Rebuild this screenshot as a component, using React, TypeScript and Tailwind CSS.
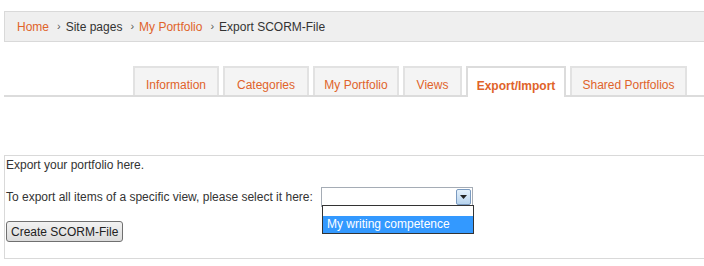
import React from 'react';

const tabs = [
  { label: 'Information', w: 'w-[86px]' },
  { label: 'Categories', w: 'w-[86px]' },
  { label: 'My Portfolio', w: 'w-[86px]' },
  { label: 'Views', w: 'w-[59px]' },
  { label: 'Export/Import', w: 'w-[100px]', active: true },
  { label: 'Shared Portfolios', w: 'w-[117px]' },
];

function Sep() {
  return <span className="ml-[8px] mr-[5px] text-[11px] text-[#555]">›</span>;
}

export default function App() {
  return (
    <div className="w-[704px] h-[266px] bg-white overflow-hidden font-['Liberation_Sans',Arial,sans-serif] text-[12px] text-[#333]">
      {/* Breadcrumb */}
      <div className="mt-[11px] ml-[4px] h-[31px] bg-[#efefef] border-y border-l border-[#d9d9d9] flex items-center pl-[12px]">
        <span className="text-[#e0632a]">Home</span>
        <Sep />
        <span>Site pages</span>
        <Sep />
        <span className="text-[#e0632a]">My Portfolio</span>
        <Sep />
        <span>Export SCORM-File</span>
      </div>

      {/* Tabs */}
      <div className="mt-[26px] ml-[4px] h-[29px] border-b-2 border-[#dcdcdc] flex items-end pl-[129px] gap-[4px]">
        {tabs.map((t) => (
          <div
            key={t.label}
            className={
              t.active
                ? `${t.w} h-[31px] -mb-[2px] bg-white border-2 border-b-0 border-[#dcdcdc] flex items-center justify-center font-bold text-[#e0632a] pt-[6px]`
                : `${t.w} h-[29px] bg-[#f4f4f4] border-2 border-b-0 border-[#e2e2e2] flex items-center justify-center text-[#e0632a] pt-[7px]`
            }
          >
            {t.label}
          </div>
        ))}
      </div>

      {/* Content */}
      <div className="relative mt-[58px] ml-[4px] h-[104px] border-y border-l border-[#d9d9d9] pl-[1px] pt-[2px]">
        <p className="leading-[15px]">Export your portfolio here.</p>
        <div className="mt-[13px] flex items-center h-[21px]">
          <span>To export all items of a specific view, please select it here:</span>
          <div className="ml-[8px] w-[152px] h-[20px] border border-[#a5acb5] bg-white flex justify-end items-center pr-[1px]">
            <div className="w-[15px] h-[16px] border border-[#7a9ac0] rounded-[2px] bg-gradient-to-b from-[#e5f1fb] to-[#b8d4ee] flex items-center justify-center">
              <svg width="7" height="4" viewBox="0 0 7 4">
                <path d="M0 0h7L3.5 4z" fill="#222" />
              </svg>
            </div>
          </div>
        </div>
        <button className="mt-[14px] h-[21px] px-[4px] border border-[#707070] rounded-[3px] bg-gradient-to-b from-[#f2f2f2] to-[#dcdcdc] text-[12px] text-[#222] leading-none">
          Create SCORM-File
        </button>

        {/* Dropdown list */}
        <div className="absolute left-[317px] top-[49px] w-[152px] h-[29px] border border-[#333] bg-white">
          <div className="h-[10px]" />
          <div className="h-[17px] bg-[#3399ff] text-white pl-[4px] leading-[17px]">My writing competence</div>
        </div>
      </div>
    </div>
  );
}
